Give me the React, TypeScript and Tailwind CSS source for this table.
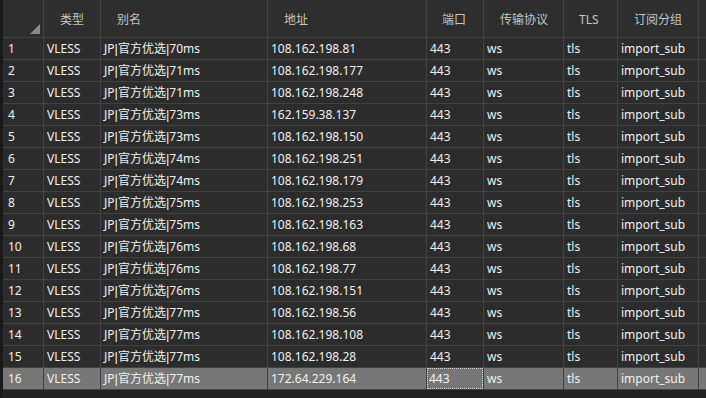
import React from "react";

const rows: [string, string, string][] = [
  ["1", "70ms", "108.162.198.81"],
  ["2", "71ms", "108.162.198.177"],
  ["3", "71ms", "108.162.198.248"],
  ["4", "73ms", "162.159.38.137"],
  ["5", "73ms", "108.162.198.150"],
  ["6", "74ms", "108.162.198.251"],
  ["7", "74ms", "108.162.198.179"],
  ["8", "75ms", "108.162.198.253"],
  ["9", "75ms", "108.162.198.163"],
  ["10", "76ms", "108.162.198.68"],
  ["11", "76ms", "108.162.198.77"],
  ["12", "76ms", "108.162.198.151"],
  ["13", "77ms", "108.162.198.56"],
  ["14", "77ms", "108.162.198.108"],
  ["15", "77ms", "108.162.198.28"],
  ["16", "77ms", "172.64.229.164"],
];

const cols = "grid-cols-[41px_57px_167px_159px_57px_80px_54px_81px_1fr]";
const font = { fontFamily: '"Noto Sans", "Noto Sans CJK SC", sans-serif' };

function Pipe() {
  return <span className="font-['Liberation_Sans'] text-[13px]">|</span>;
}

export default function App() {
  return (
    <div className="w-[706px] h-[398px] bg-[#232323] overflow-hidden flex text-[12px] leading-none" style={font}>
      <div className="w-[3px] bg-[#1b1b1b] shrink-0" />
      <div className="flex-1 flex flex-col">
        <div className={`grid ${cols} h-[38px] text-[#c4c4c4]`}>
          <div className="relative bg-[#2e2e2e] border-r border-b border-[#424242]">
            <div className="absolute right-[3px] bottom-[3px] w-0 h-0 border-l-[10px] border-l-transparent border-b-[10px] border-b-[#8a8a8a]" />
          </div>
          <div className="bg-[#2e2e2e] border-r border-b border-[#424242] flex items-center pl-[16px] pt-[2px]">类型</div>
          <div className="bg-[#2e2e2e] border-r border-b border-[#424242] flex items-center pl-[16px] pt-[2px]">别名</div>
          <div className="bg-[#2e2e2e] border-r border-b border-[#424242] flex items-center pl-[16px] pt-[2px]">地址</div>
          <div className="bg-[#2e2e2e] border-r border-b border-[#424242] flex items-center pl-[15px] pt-[2px]">端口</div>
          <div className="bg-[#2e2e2e] border-r border-b border-[#424242] flex items-center pl-[16px] pt-[2px]">传输协议</div>
          <div className="bg-[#2e2e2e] border-r border-b border-[#424242] flex items-center pl-[15px] pt-[2px]">TLS</div>
          <div className="bg-[#2e2e2e] border-r border-b border-[#424242] flex items-center pl-[16px] pt-[2px]">订阅分组</div>
          <div className="bg-[#2e2e2e] border-b border-[#424242]" />
        </div>
        {rows.map(([n, ms, ip]) => {
          const sel = n === "16";
          const bg = sel ? "bg-[#777777]" : "bg-[#2c2c2c]";
          const cell = `${bg} border-r border-b border-[#424242] flex items-center pl-[3px] whitespace-nowrap overflow-hidden`;
          return (
            <div key={n} className={`grid ${cols} h-[22px] text-[#f0f0f0]`}>
              <div className={`${cell} pl-[5px]`}>{n}</div>
              <div className={cell}>VLESS</div>
              <div className={`${cell} pl-[2px]`}>
                <span>
                  JP<Pipe />官方优选<Pipe />{ms}
                </span>
              </div>
              <div className={`${cell} pl-[2px]`}>{ip}</div>
              {sel ? (
                <div className={`${bg} border-r border-b border-[#424242] flex items-stretch`}>
                  <div className="flex-1 flex items-center pl-[1px] border border-dotted border-[#d8d8d8]">443</div>
                </div>
              ) : (
                <div className={`${cell} pl-[2px]`}>443</div>
              )}
              <div className={`${cell} pl-[2px]`}>ws</div>
              <div className={`${cell} pl-[3px]`}>tls</div>
              <div className={`${cell} pl-[2px]`}>import_sub</div>
              <div className={`${bg} border-b border-[#424242]`} />
            </div>
          );
        })}
      </div>
    </div>
  );
}
